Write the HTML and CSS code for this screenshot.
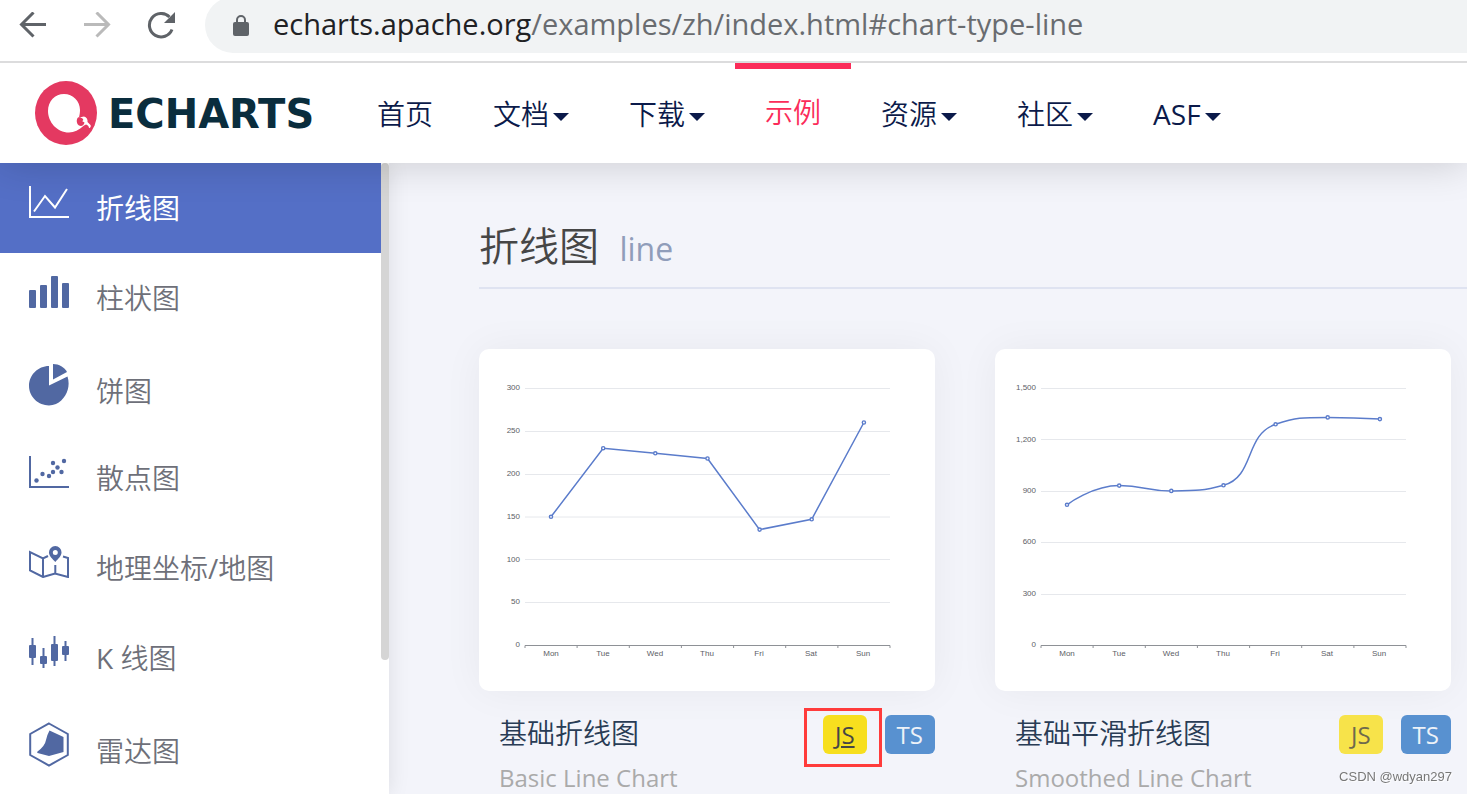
FILE: index.html
```html
<!DOCTYPE html>
<html lang="zh">
<head>
<meta charset="utf-8">
<title>Examples - Apache ECharts</title>
<link rel="stylesheet" href="styles.css">
</head>
<body>
<div class="browser">
  <div class="browser-buttons">
    <button class="tool" aria-label="Back"><svg width="28" height="28" viewBox="0 0 28 28"><path d="M14.5 0.500 2.500 12.500 14.500 24.500M2.500 12.500H27"/></svg></button>
    <button class="tool tool--off" aria-label="Forward"><svg width="28" height="28" viewBox="0 0 28 28"><path d="M13.500 0.500 25.500 12.500 13.500 24.500M25.500 12.500H1"/></svg></button>
    <button class="tool" aria-label="Reload"><svg width="28" height="28" viewBox="0 0 28 28"><path d="M25 17.500A11.700 11.700 0 1 1 22.500 5"/><path class="solid" d="M28 0V11H17Z"/></svg></button>
  </div>
  <div class="address">
    <svg class="lock" width="16" height="21" viewBox="0 0 16 21"><path d="M4 8V5a4 4 0 0 1 8 0v3" fill="none" stroke="#5f6368" stroke-width="2"/><rect y="7" width="16" height="14" rx="2" fill="#5f6368"/></svg>
    <span class="url"><span class="host">echarts.apache.org</span>/examples/zh/index.html#chart-type-line</span>
  </div>
</div>

<header class="site-header">
  <a class="brand" href="#">
    <svg class="brand-mark" width="62" height="64" viewBox="0 0 62 64"><ellipse cx="31" cy="32" rx="31" ry="32" fill="#e43961"/><path d="M29 13C38 13 45 20 45 29C45 32 44.500 34 44 36.500L49 35.500C51.500 36 53 38.500 52.500 41L55.500 44C56.500 45.500 55 47.500 54 47C54 45 52.500 44 51 43.500L49 44.500C44 49 39 51.500 34 51.500C22 51.500 13 41 13 30C13 20 20 13 29 13Z" fill="#fff"/><path d="M43 36.500C44.500 36 46.500 36.500 48 38C48.500 39 48 40 47 40L49.500 41.500C49 44.500 46.500 45.500 44 44.500C41.500 43 41 38.500 43 36.500Z" fill="#e43961"/></svg>
    <span class="brand-name">ECHARTS</span>
  </a>
  <nav class="nav">
    <a class="nav-link" href="#">首页</a>
    <a class="nav-link nav-link--menu" href="#">文档</a>
    <a class="nav-link nav-link--menu" href="#">下载</a>
    <a class="nav-link nav-link--active" href="#">示例</a>
    <a class="nav-link nav-link--menu" href="#">资源</a>
    <a class="nav-link nav-link--menu" href="#">社区</a>
    <a class="nav-link nav-link--menu latin" href="#">ASF</a>
  </nav>
</header>

<div class="layout">
  <aside class="sidebar">
    <nav class="types">
      <a class="type type--active" href="#"><svg class="icon" width="40" height="32" viewBox="0 0 40 32"><path class="line" d="M1 0V31H40M5 25.500 16 10 26 21.500 38 3"/></svg><span>折线图</span></a>
      <a class="type" href="#"><svg class="icon" width="40" height="32" viewBox="0 0 40 32"><rect y="14" width="7" height="18" rx="1"/><rect x="11" y="9" width="7" height="23" rx="1"/><rect x="22" width="7" height="32" rx="1"/><rect x="33" y="7" width="7" height="25" rx="1"/></svg><span>柱状图</span></a>
      <a class="type type--tall" href="#"><svg class="icon" width="40" height="42" viewBox="0 0 40 42"><path d="M20 2V21.500L38.500 12.500C42 23 37 35 27 40C15 45 0 36 0 22C0 11 9 2 20 2Z"/><path d="M24 0C30 0 35.500 3.500 38 8L24 15.500Z"/></svg><span>饼图</span></a>
      <a class="type" href="#"><svg class="icon" width="40" height="32" viewBox="0 0 40 32"><path class="line" d="M1 0V31H40"/><circle cx="7.500" cy="24.500" r="2.200"/><circle cx="13.500" cy="18" r="2.200"/><circle cx="20" cy="20" r="2.200"/><circle cx="24" cy="7" r="2.200"/><circle cx="28.500" cy="11.500" r="2.200"/><circle cx="24" cy="16" r="2.200"/><circle cx="32.500" cy="16" r="2.200"/><circle cx="35" cy="5" r="2.200"/></svg><span>散点图</span></a>
      <a class="type" href="#"><svg class="icon" width="40" height="32" viewBox="0 0 40 32"><path class="line" d="M19 10 14 12.500 1 6V24.500L14 31V12.500M14 31 26 27.500 39 31V12L34 10.500M26.300 19V27.500"/><path fill-rule="evenodd" d="M26.300 0A6.300 6.300 0 0 1 32.500 6.500C32.500 10 29 13 26.300 16C23.500 13 20 10 20 6.500A6.300 6.300 0 0 1 26.300 0ZM26.300 4A2.500 2.500 0 1 0 26.300 9A2.500 2.500 0 1 0 26.300 4Z"/></svg><span>地理坐标<span class="latin">/</span>地图</span></a>
      <a class="type" href="#"><svg class="icon" width="40" height="32" viewBox="0 0 40 32"><path class="line" d="M3.500 2V29M14.500 12V32M25.500 0V30M36.500 5V25"/><rect y="9" width="7" height="13" rx="1"/><rect x="11" y="20" width="7" height="8" rx="1"/><rect x="22" y="8" width="7" height="17" rx="1"/><rect x="33" y="10" width="7" height="9" rx="1"/></svg><span><span class="latin">K </span>线图</span></a>
      <a class="type type--tall" href="#"><svg class="icon" width="40" height="45" viewBox="0 0 40 45"><path class="line" d="M20 1.500 38.800 12V33L20 43.500 1.200 33V12Z"/><path d="M20.500 8.500 34.500 15V30L20 34 8.500 31C8 30.500 8 30 8.500 29.500Q16 24 17 18Q18 13 20.500 8.500Z"/></svg><span>雷达图</span></a>
    </nav>
    <div class="scroll-track"><div class="scroll-thumb"></div></div>
  </aside>

  <main class="content">
    <h1 class="section-title">折线图 <span class="section-en">line</span></h1>
    <div class="cards">
      <article class="card">
        <svg class="chart" viewBox="0 0 456 342">
          <path class="grid" d="M46 39.500H411M46 82.500H411M46 125.500H411M46 168H411M46 210.500H411M46 253.500H411"/>
          <path class="axis" d="M46 299V296.500H411V299M98.100 296.500V299M150.300 296.500V299M202.400 296.500V299M254.600 296.500V299M306.700 296.500V299M358.900 296.500V299"/>
          <g class="y-labels"><text x="41" y="41">300</text><text x="41" y="84">250</text><text x="41" y="127">200</text><text x="41" y="170">150</text><text x="41" y="213">100</text><text x="41" y="255">50</text><text x="41" y="298">0</text></g>
          <g class="x-labels"><text x="72" y="307">Mon</text><text x="124" y="307">Tue</text><text x="176" y="307">Wed</text><text x="228" y="307">Thu</text><text x="280" y="307">Fri</text><text x="332" y="307">Sat</text><text x="384" y="307">Sun</text></g>
          <path class="series" d="M72 167.800 124.200 99.200 176.300 104.300 228.500 109.500 280.600 180.600 332.700 170.300 384.900 73.500"/>
          <g class="dots"><circle cx="72" cy="167.800" r="1.600"/><circle cx="124.200" cy="99.200" r="1.600"/><circle cx="176.300" cy="104.300" r="1.600"/><circle cx="228.500" cy="109.500" r="1.600"/><circle cx="280.600" cy="180.600" r="1.600"/><circle cx="332.700" cy="170.300" r="1.600"/><circle cx="384.900" cy="73.500" r="1.600"/></g>
        </svg>
        <div class="card-info">
          <div class="card-names"><h2 class="card-title">基础折线图</h2><p class="card-sub">Basic Line Chart</p></div>
          <div class="badges"><a class="badge badge--js badge--hover" href="#">JS</a><a class="badge badge--ts" href="#">TS</a></div>
        </div>
      </article>
      <article class="card">
        <svg class="chart" viewBox="0 0 456 342">
          <path class="grid" d="M46 39.500H411M46 90.500H411M46 142.500H411M46 193.500H411M46 245.500H411"/>
          <path class="axis" d="M46 299V296.500H411V299M98.100 296.500V299M150.300 296.500V299M202.400 296.500V299M254.600 296.500V299M306.700 296.500V299M358.900 296.500V299"/>
          <g class="y-labels"><text x="41" y="41">1,500</text><text x="41" y="93">1,200</text><text x="41" y="144">900</text><text x="41" y="195">600</text><text x="41" y="247">300</text><text x="41" y="298">0</text></g>
          <g class="x-labels"><text x="72" y="307">Mon</text><text x="124" y="307">Tue</text><text x="176" y="307">Wed</text><text x="228" y="307">Thu</text><text x="280" y="307">Fri</text><text x="332" y="307">Sat</text><text x="384" y="307">Sun</text></g>
          <path class="series" d="M72 155.800C72 155.800 97.400 136.600 124.200 136.600C149.500 136.600 150.200 141.900 176.300 141.900C202.400 141.800 207.800 141.900 228.500 136.300C260.100 127.700 249.200 85.800 280.600 75.300C301.200 68.400 306.600 68.400 332.700 68.400C358.800 68.400 384.900 70.100 384.900 70.100"/>
          <g class="dots"><circle cx="72" cy="155.800" r="1.600"/><circle cx="124.200" cy="136.600" r="1.600"/><circle cx="176.300" cy="141.900" r="1.600"/><circle cx="228.500" cy="136.300" r="1.600"/><circle cx="280.600" cy="75.300" r="1.600"/><circle cx="332.700" cy="68.400" r="1.600"/><circle cx="384.900" cy="70.100" r="1.600"/></g>
        </svg>
        <div class="card-info">
          <div class="card-names"><h2 class="card-title">基础平滑折线图</h2><p class="card-sub">Smoothed Line Chart</p></div>
          <div class="badges"><a class="badge badge--js" href="#">JS</a><a class="badge badge--ts" href="#">TS</a></div>
        </div>
      </article>
    </div>
  </main>
</div>
<div class="watermark">CSDN @wdyan297</div>
</body>
</html>
```
FILE: styles.css
```css
* { box-sizing: border-box; }

body {
  margin: 0;
  height: 100vh;
  display: flex;
  flex-direction: column;
  overflow: hidden;
  background: #f3f4fa;
  font-family: "Open Sans", "Noto Sans CJK SC", sans-serif;
}

a { color: inherit; text-decoration: none; }

/* Browser bar */
.browser {
  flex: none;
  position: relative;
  z-index: 3;
  display: flex;
  height: 63px;
  background: #fff;
  border-bottom: 2px solid #dcdcdd;
}
.browser-buttons { display: flex; gap: 36px; padding: 12px 30px 0 19px; }
.tool { width: 28px; height: 28px; padding: 0; border: 0; background: none; color: #5f6368; }
.tool--off { color: #bababa; }
.tool svg { display: block; fill: none; stroke: currentColor; stroke-width: 3; }
.tool .solid { fill: currentColor; stroke: none; }
.address {
  flex: 1;
  display: flex;
  align-items: center;
  gap: 24px;
  height: 56px;
  margin-top: -3px;
  padding-left: 28px;
  background: #f1f3f4;
  border-radius: 28px 0 0 28px;
}
.url { padding-bottom: 2px; color: #696c70; font-size: 29px; line-height: 40px; white-space: nowrap; }
.host { color: #202124; }

/* Site header */
.site-header {
  flex: none;
  position: relative;
  z-index: 2;
  display: flex;
  height: 100px;
  padding-left: 35px;
  background: #fff;
  box-shadow: 0 0 40px rgba(0, 0, 0, 0.18);
}
.brand { display: flex; align-items: center; gap: 11px; width: 312px; }
.brand-name { padding-top: 2px; color: #0a2d3d; font-family: "DejaVu Sans", sans-serif; font-size: 40px; font-weight: bold; line-height: 48px; }
.nav { display: flex; color: #0b1a4a; font-size: 28px; font-weight: 350; line-height: 40px; white-space: nowrap; }
.nav-link { display: flex; align-items: center; padding: 1px 30px 0; }
.nav-link--menu::after {
  content: "";
  margin: 6px 0 0 4px;
  border: 8px solid transparent;
  border-top-color: #0b1a4a;
  border-bottom: 0;
}
.nav-link--active { padding-bottom: 8px; border-top: 6px solid #fb2c59; color: #fb2c59; padding-top: 0; }
.latin { font-weight: 400; }

/* Sidebar */
.layout { flex: 1; min-height: 0; display: flex; }
.sidebar { flex: none; display: flex; width: 389px; background: #fff; box-shadow: 0 0 20px rgba(0, 0, 0, 0.1); }
.types { flex: 1; color: #6e7079; font-size: 28px; line-height: 40px; font-weight: 350; }
.type { display: flex; align-items: center; gap: 27px; height: 90px; padding-left: 29px; }
.type--tall { padding-top: 5px; }
.type--active { background: #546fc6; color: #fff; font-weight: 400; }
.icon { margin-bottom: 12px; fill: #5168a2; }
.icon .line { fill: none; stroke: #5168a2; stroke-width: 2; }
.type--active .icon .line { stroke: #fff; }
.scroll-track { width: 8px; }
.scroll-thumb { height: 497px; max-height: 100%; border-radius: 4px; background: #d5d5d5; }

/* Examples */
.content { flex: 1; min-width: 0; padding: 54px 0 0 90px; }
.section-title {
  margin: 0;
  padding-bottom: 12px;
  border-bottom: 2px solid #dfe3f1;
  color: #464646;
  font-size: 40px;
  font-weight: 350;
  line-height: 58px;
  height: 72px;
}
.section-en { margin-left: 10px; color: #909dba; font-size: 32px; font-weight: 400; line-height: 40px; }
.cards { display: grid; grid-template-columns: 1fr 1fr; gap: 60px; padding: 60px 16px 0 0; }
.chart { display: block; width: 100%; border-radius: 10px; background: #fff; box-shadow: 0 0 40px rgba(0, 0, 0, 0.05); }
.grid { stroke: #e6e8ec; }
.axis { fill: none; stroke: #8e9196; }
.series { fill: none; stroke: #5b7ccb; stroke-width: 1.5; }
.dots { fill: #fff; stroke: #5b7ccb; stroke-width: 1.4; }
.y-labels, .x-labels { fill: #5c5e66; font-family: "Liberation Sans", sans-serif; font-size: 8px; text-anchor: end; }
.x-labels { text-anchor: middle; }
.card-info { display: flex; justify-content: space-between; padding: 20px 0 0 20px; }
.card-title { margin: 0; color: #293c55; font-size: 28px; font-weight: 350; line-height: 44px; }
.card-sub { margin: 6px 0 0; color: #aaa; font-size: 24px; line-height: 34px; }
.badges { display: flex; gap: 18px; padding-top: 4px; }
.badge { position: relative; height: 39px; padding: 0 12px; border-radius: 6px; font-size: 24px; line-height: 39px; }
.badge--js { background: #f7e34a; color: #6e6a4d; }
.badge--ts { background: #5891d0; color: #edf2f8; }
.badge--hover { background: #f7df1e; color: #464646; text-decoration: underline; }
.badge--hover::after {
  content: "";
  position: absolute;
  inset: -7px -15px -13px -19px;
  border: 3px solid #ff3b3b;
}

.watermark {
  position: fixed;
  right: 15px;
  bottom: 8px;
  color: #777;
  font-family: "Liberation Sans", sans-serif;
  font-size: 13px;
  line-height: 18px;
  text-shadow: 1px 1px 1px #fff;
}
```
